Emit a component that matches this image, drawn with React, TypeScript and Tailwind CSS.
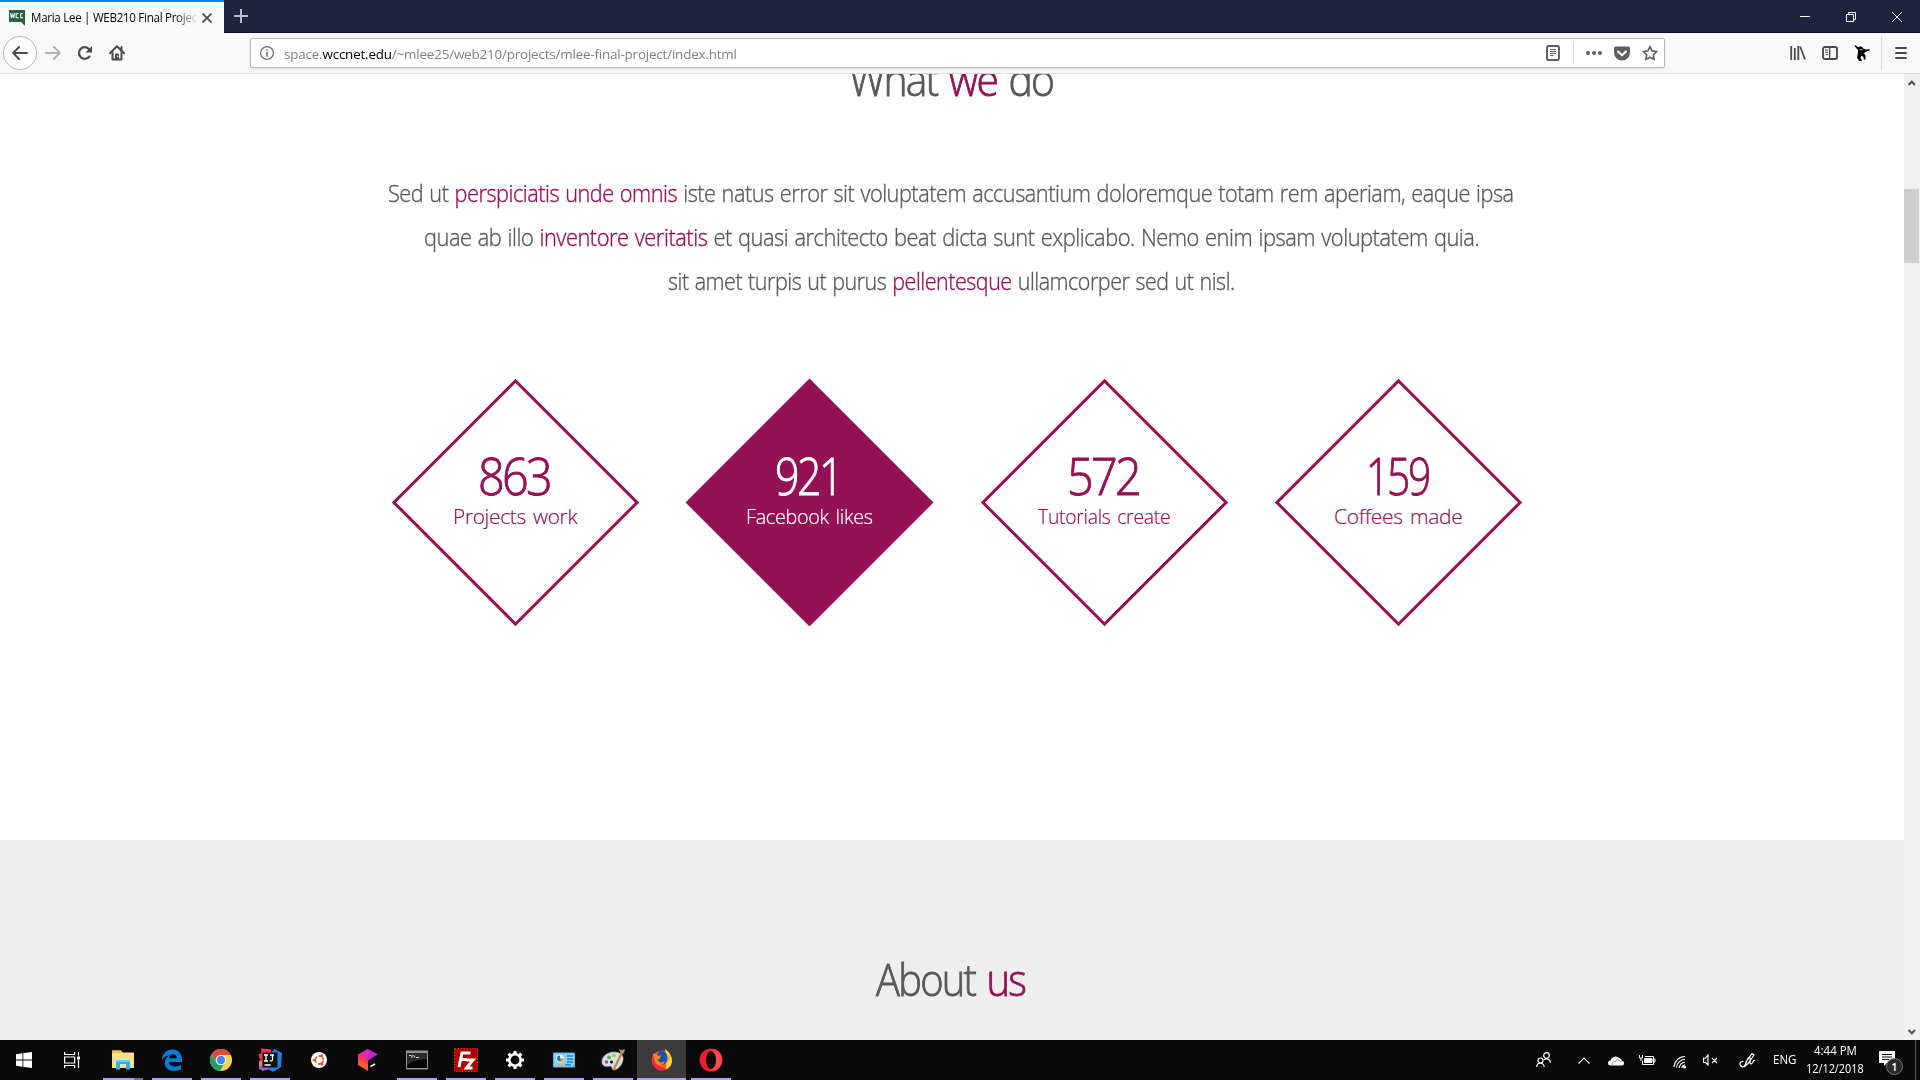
import { useLayoutEffect, useRef, useState, type ReactNode } from "react";

/** Single line of text condensed or stretched to a given width. */
function Fit({ w, className = "", children }: { w: number; className?: string; children: ReactNode }) {
  const ref = useRef<HTMLSpanElement>(null);
  const [scale, setScale] = useState(1);
  useLayoutEffect(() => {
    if (ref.current) setScale(w / ref.current.offsetWidth);
  }, [w]);
  return (
    <span className={`block shrink-0 ${className}`} style={{ width: w }}>
      <span ref={ref} className="inline-block origin-left whitespace-nowrap" style={{ transform: `scaleX(${scale})` }}>
        {children}
      </span>
    </span>
  );
}

const Hi = ({ children }: { children: ReactNode }) => <span className="text-[#951155]">{children}</span>;

function TabBar() {
  return (
    <div className="flex h-[33px] bg-[#202340]">
      <div className="flex h-[33px] w-[224px] items-center border-t-2 border-[#0a84ff] bg-[#f9f9f9] pl-[9px]">
        <svg width="16" height="16" viewBox="0 0 16 16" className="mt-px shrink-0">
          <path d="M0 0h16v16l-4-4H0z" fill="#27623f" />
          <path d="M1.500 3l.8 5 1.200-3.500L4.700 8l.8-5M9.500 3.500H7.200v4.200h2.300M14 3.500h-2.300v4.200H14" fill="none" stroke="#dfe9e3" strokeWidth="1.200" />
        </svg>
        <div className="ml-[6px] w-[167px] overflow-hidden text-[12px] leading-[20px] text-black [mask-image:linear-gradient(to_right,black_145px,transparent_167px)]">
          <Fit w={166} className="tracking-[-0.3px]">Maria Lee | WEB210 Final Projec</Fit>
        </div>
        <svg width="10" height="10" viewBox="0 0 10 10" className="ml-[4px]" stroke="#4a4a4f" strokeWidth="1.700">
          <path d="M.5.5l9 9M9.500.5l-9 9" />
        </svg>
      </div>
      <div className="flex flex-1 items-center border-b border-[#0f1126] pl-[10px]">
        <svg width="14" height="14" viewBox="0 0 14 14" stroke="#b9bac6" strokeWidth="2"><path d="M7 0v14M0 7h14" /></svg>
        <div className="flex-1" />
        <svg width="46" height="32" viewBox="0 0 46 32" stroke="#fff" fill="none"><path d="M18 16.500h10" /></svg>
        <svg width="46" height="32" viewBox="0 0 46 32" stroke="#fff" fill="none"><path d="M18.500 14.500h7v7h-7zM20.500 14.500v-2h7v7h-2" /></svg>
        <svg width="46" height="32" viewBox="0 0 46 32" stroke="#fff" fill="none"><path d="M18 12l10 10M28 12l-10 10" /></svg>
      </div>
    </div>
  );
}

function NavBar() {
  return (
    <div className="flex h-[41px] items-center border-b border-[#d9d9db] bg-[#f9f9f9]">
      <div className="ml-[3px] flex size-[34px] items-center justify-center rounded-full border border-[#b5b5b7] bg-white">
        <svg width="16" height="14" viewBox="0 0 16 14" fill="none" stroke="#4a4a4f" strokeWidth="2" strokeLinecap="round" strokeLinejoin="round"><path d="M15 7H1.500M7 1L1.200 7 7 13" /></svg>
      </div>
      <svg width="16" height="14" viewBox="0 0 16 14" className="ml-[8px]" fill="none" stroke="#b3b3b6" strokeWidth="2" strokeLinecap="round" strokeLinejoin="round"><path d="M1 7h13.500M9 1l5.800 6L9 13" /></svg>
      <svg width="16" height="16" viewBox="0 0 16 16" className="ml-[16px]"><path d="M12.400 11.500A5.800 5.800 0 1 1 12.200 4.200" fill="none" stroke="#4a4a4f" strokeWidth="2.200" strokeLinecap="round" /><path d="M15 1v6.500H8.500z" fill="#4a4a4f" /></svg>
      <svg width="16" height="16" viewBox="0 0 16 16" className="ml-[16px]"><path d="M1 8.200L8 1.300l7 6.900M12.500 2v3" fill="none" stroke="#4a4a4f" strokeWidth="2" strokeLinecap="round" strokeLinejoin="round" /><path d="M2.500 8v6.500a1 1 0 0 0 1 1h9a1 1 0 0 0 1-1V8L11.500 6v7.500h-7V6z" fill="#4a4a4f" /><path d="M6 14V9.500a1 1 0 0 1 1-1h2a1 1 0 0 1 1 1V14z" fill="#4a4a4f" /><circle cx="8.800" cy="11.300" r=".8" fill="#fff" /></svg>
      <div className="ml-[125px] flex h-[30px] w-[1415px] items-center rounded-[2px] border border-[#b8b8ba] bg-white shadow-sm">
        <svg width="14" height="14" viewBox="0 0 14 14" className="ml-[9px]"><circle cx="7" cy="7" r="6.400" fill="none" stroke="#6a6a6e" strokeWidth="1.200" /><path d="M6.200 6h1.600v4.700H6.200zM6.200 3.200h1.600v1.600H6.200z" fill="#6a6a6e" /></svg>
        <Fit w={453} className="mt-[2px] ml-[10px] text-[13.500px] leading-[24px] tracking-[-0.2px] text-[#808080]">space.<span className="text-black">wccnet.edu</span>/~mlee25/web210/projects/mlee-final-project/index.html</Fit>
        <div className="flex-1" />
        <svg width="14" height="16" viewBox="0 0 14 16"><rect x="1" y="1" width="12" height="14" rx="1.500" fill="none" stroke="#5f5f62" strokeWidth="1.900" /><path d="M4 4.500h6M4 6.500h6M4 8.500h6M4 10.500h3.500" stroke="#5f5f62" /></svg>
        <div className="ml-[13px] h-[22px] w-px bg-[#dcdcde]" />
        <svg width="16" height="4" viewBox="0 0 16 4" className="ml-[12px]" fill="#5f5f62"><circle cx="2" cy="2" r="2" /><circle cx="8" cy="2" r="2" /><circle cx="14" cy="2" r="2" /></svg>
        <svg width="16" height="15" viewBox="0 0 16 15" className="ml-[12px]"><path d="M1.500.5h13A1.500 1.500 0 0 1 16 2v4.500a8 8 0 0 1-16 0V2A1.500 1.500 0 0 1 1.500.5z" fill="#5f5f62" /><path d="M4 5.500l4 3.800 4-3.800" fill="none" stroke="#fff" strokeWidth="2" strokeLinecap="round" strokeLinejoin="round" /></svg>
        <svg width="16" height="16" viewBox="0 0 16 16" className="mr-[6px] ml-[12px]"><path d="M8 1.500l2 4.400 4.800.6-3.500 3.300.9 4.800L8 12.300l-4.200 2.300.9-4.800L1.200 6.500 6 5.900z" fill="none" stroke="#5f5f62" strokeWidth="1.700" strokeLinejoin="round" /></svg>
      </div>
      <svg width="16" height="14" viewBox="0 0 16 14" className="ml-[125px]" stroke="#4a4a4f" strokeWidth="1.800"><path d="M1.200 0v14M4.800 2v12M8.300 0v14M10.200.5L15 13.500" /></svg>
      <svg width="16" height="14" viewBox="0 0 16 14" className="ml-[16px]" fill="none" stroke="#4a4a4f"><rect x="1" y="1" width="14" height="12" rx="2" strokeWidth="1.900" /><path d="M7.700 1v12" strokeWidth="1.300" /><path d="M3 4h3M3 6.200h3M4 8.400h2" /></svg>
      <svg width="16" height="16" viewBox="0 0 16 16" className="ml-[16px]"><path d="M1 0l3.500 2.500C5 1 8.500 1 9 3.500l3.500 1L15.500 4v1.500L11 7 10 8.500l1.500 2V14L10 15l-.8-3.500L7.500 11 6.500 12.500 8 16H5l-2-3.500.8-3.500L4 5 .5 1z" fill="#000" /><path d="M5.500 4.700h3" stroke="#f9f9f9" strokeWidth=".8" /></svg>
      <div className="ml-[11px] h-[34px] w-px bg-[#dcdcde]" />
      <svg width="12" height="12" viewBox="0 0 12 12" className="ml-[13px]" stroke="#4a4a4f" strokeWidth="2" strokeLinecap="round"><path d="M1 1h10M1 6h10M1 11h10" /></svg>
    </div>
  );
}

const stats = [
  { n: "863", nw: 72, label: "Projects work", lw: 124 },
  { n: "921", nw: 66, label: "Facebook likes", lw: 127, filled: true },
  { n: "572", nw: 72, label: "Tutorials create", lw: 132 },
  { n: "159", nw: 63, label: "Coffees made", lw: 128 },
];

function Stat({ n, nw, label, lw, filled }: (typeof stats)[number]) {
  return (
    <div className={`relative flex h-[247px] w-[247px] flex-col items-center pt-[70px] ${filled ? "text-white" : "text-[#951155]"}`}>
      <div className={`absolute top-[36px] left-[36px] size-[175px] rotate-45 border-[3px] border-[#951155] ${filled ? "bg-[#951155]" : ""}`} />
      <Fit w={nw} className="relative mr-[3px] text-[52px] leading-[52px] tracking-[-3px] [-webkit-text-stroke:0.9px]">{n}</Fit>
      <Fit w={lw} className="relative mt-px mr-px text-[21px] leading-[28px] tracking-[-0.3px] [word-spacing:2px] [-webkit-text-stroke:0.2px]">{label}</Fit>
    </div>
  );
}

function Page() {
  return (
    <div className="flex h-[966px]">
      <div className="flex w-[1904px] flex-col overflow-hidden bg-white font-light text-[#58595b]">
        <section className="flex h-[766px] shrink-0 flex-col items-center">
          <Fit w={204} className="mt-[-25px] mr-[3px] text-[44px] leading-[60px] tracking-[-2px] [word-spacing:3px] [-webkit-text-stroke:0.8px]">What <Hi>we</Hi> do</Fit>
          <div className="mt-[62px] mr-[2px] flex flex-col items-center text-[24px] leading-[44px] tracking-[-0.500px] [word-spacing:1px] [-webkit-text-stroke:0.35px]">
            <Fit w={1126}>Sed ut <Hi>perspiciatis unde omnis</Hi> iste natus error sit voluptatem accusantium doloremque totam rem aperiam, eaque ipsa</Fit>
            <Fit w={1055}>quae ab illo <Hi>inventore veritatis</Hi> et quasi architecto beat dicta sunt explicabo. Nemo enim ipsam voluptatem quia.</Fit>
            <Fit w={567}>sit amet turpis ut purus <Hi>pellentesque</Hi> ullamcorper sed ut nisl.</Fit>
          </div>
          <div className="mt-[76px] ml-[10px] flex gap-[47.400px]">
            {stats.map((s) => <Stat key={s.n} {...s} />)}
          </div>
        </section>
        <section className="flex h-[200px] shrink-0 flex-col items-center bg-[#eeeeee] pt-[109px]">
          <Fit w={149} className="mr-[3px] text-[44px] leading-[60px] tracking-[-2px] [word-spacing:3px] [-webkit-text-stroke:0.8px]">About <Hi>us</Hi></Fit>
        </section>
      </div>
      <div className="flex w-4 flex-col items-start bg-[#f0f0f0]">
        <svg width="16" height="17" viewBox="0 0 16 17" fill="none" stroke="#505050" strokeWidth="2"><path d="M4.500 11l3.300-3.300L11 11" /></svg>
        <div className="mt-[98px] h-[74px] w-[15px] bg-[#cdcdcd]" />
        <div className="flex-1" />
        <svg width="16" height="17" viewBox="0 0 16 17" fill="none" stroke="#505050" strokeWidth="2"><path d="M4.500 7l3.300 3.300L11 7" /></svg>
      </div>
    </div>
  );
}

const Art = ({ children }: { children: ReactNode }) => <svg width="24" height="24" viewBox="0 0 24 24">{children}</svg>;

const apps: { id: string; open: boolean; active?: boolean; art: ReactNode }[] = [
  { id: "explorer", open: true, art: <Art><path d="M1 2.500h9l2 2h11V20H1z" fill="#ffe08a" /><path d="M1 2.500h9l1.500 2.500H1z" fill="#f3b928" /><path d="M3 3.500h5v1H3z" fill="#fff6" /><path d="M5 12h14v9.500h-4V16H9v5.500H5z" fill="#35b0ea" /><path d="M5 12h14v2H5z" fill="#72cdf4" /></Art> },
  { id: "edge", open: true, art: <Art><path d="M2 12.500C2 5.500 6.500 1.500 12.500 1.500c6.500 0 9.500 5 9.500 10v2.500H9c.3 3.500 3.500 4.500 6.300 4.500 2.300 0 4.300-.6 5.700-1.500v4.300c-2 1.200-4.500 1.700-7.200 1.700C8.500 23 4.800 19.500 4.800 15c0-3.500 2-6.300 5-7.700C6 7.500 3.500 9.500 2 12.500zM9.100 10.300h7.700c0-2-1-4.100-3.600-4.100-2.500 0-3.700 2-4.100 4.100z" fill="#0b7bdb" /></Art> },
  { id: "chrome", open: true, art: <Art><circle cx="12" cy="12" r="11" fill="#ffcf47" /><path d="M2.500 6.500A11 11 0 0 0 11 23l5-8.500L12 12 7 14z" fill="#1da261" /><path d="M2.500 6.500A11 11 0 0 1 21.700 7H12l-4.800 7z" fill="#dd4b3e" /><circle cx="12" cy="12" r="5.300" fill="#f4f4f4" /><circle cx="12" cy="12" r="4.200" fill="#4285f4" /></Art> },
  { id: "intellij", open: true, art: <Art><path d="M3 .5l10 1 2 10H2L.5 6.500 3.500 5z" fill="#fe315d" /><path d="M13 5l3-4 8 4-1 14-7 4.500-6-4z" fill="#1f7ee8" /><path d="M1 13l6-3 5 11-6 1-5-2z" fill="#e27a6b" /><path d="M2 18h7v3.500L5 23l-4-2z" fill="#9b5bd8" /><path d="M10 18h6l-1 6-5-3z" fill="#2f78e8" /><path d="M4.500 4.500h15v15h-15z" fill="#111" /><path d="M6 7h4M8 7v6M6 13h4M12 7h4M14.500 7v4.500c0 1.500-1.500 1.700-2.700 1.200M6.500 17h6" fill="none" stroke="#fff" strokeWidth="1.300" /></Art> },
  { id: "ubuntu", open: false, art: <Art><circle cx="12" cy="12" r="8" fill="#fff" /><circle cx="12.300" cy="12" r="4" fill="none" stroke="#e2541f" strokeWidth="1.500" strokeDasharray="6.900 1.500" strokeDashoffset="-.8" /><circle cx="6.900" cy="12" r="1.300" fill="#e2541f" /><circle cx="14.800" cy="7.500" r="1.300" fill="#e2541f" /><circle cx="14.800" cy="16.500" r="1.300" fill="#e2541f" /></Art> },
  { id: "toolbox", open: false, art: <Art><path d="M12 1l10 5.500L12 12.500 2 6.500z" fill="#c524cf" /><path d="M12 1L2 6.500V12l10-2z" fill="#e22fa0" /><path d="M2 6.500l10 6V23L2 17z" fill="#ff5a3c" /><path d="M2 6.500l10 6V16L2 11z" fill="#fa3358" /><path d="M22 6.500V17l-10 6V12.500z" fill="#120414" /><path d="M14.500 18.500l4.500-2.500" stroke="#fff" strokeWidth="1.500" /></Art> },
  { id: "terminal", open: true, art: <Art><path d="M1 2.500h22v19H1z" fill="#8d959a" /><path d="M2 5h20v15H2z" fill="#050505" /><path d="M2 5h20v6C14 11 8 13 2 17z" fill="#2b2d2f" /><path d="M4 7.500h2M7 7v3M8.500 7l1.500 2.500M11 9.500h3" stroke="#ddd" /></Art> },
  { id: "filezilla", open: true, art: <Art><path d="M.5.5h23v23H.5z" fill="#b50000" stroke="#e02a20" strokeDasharray="1.500 1.500" /><path d="M5 19L8 5h8.500M6.500 11.500h6.500M12.500 12h6.500l-6.500 8h6" fill="none" stroke="#fff" strokeWidth="3" /></Art> },
  { id: "settings", open: true, art: <Art><circle cx="12" cy="12" r="5.700" fill="none" stroke="#fff" strokeWidth="2.600" /><path d="M12 3v3M12 18v3M3 12h3M18 12h3M5.600 5.600l2.200 2.200M16.200 16.200l2.200 2.200M18.400 5.600l-2.200 2.200M7.800 16.200l-2.200 2.200" stroke="#fff" strokeWidth="3.200" /></Art> },
  { id: "panel", open: true, art: <Art><path d="M1.500 5h21v14h-21z" fill="#82d1f7" stroke="#4bb3e8" /><circle cx="8" cy="10.500" r="4" fill="#e9f7ff" /><path d="M8 10.500V7.500a3 3 0 1 0 3 3z" fill="#2379c4" /><path d="M8 10.500h4a4 4 0 0 1-2 3.400z" fill="#f5a838" /><path d="M15 8h6M15 11h6M15 14h6" stroke="#2d83c4" strokeWidth="1.300" /><path d="M4 16.800h8" stroke="#f5a838" strokeWidth="1.300" /><path d="M13 16.800h6" stroke="#2379c4" strokeWidth="1.300" /></Art> },
  { id: "paint", open: true, art: <Art><path d="M1 15C0 9 6 4 13 4c6 0 10 3 9 8-1 6-6 10-9 10-3 0-1-4-4-4-3 1-7 1-8-3z" fill="#cfe4f2" stroke="#88aac0" strokeWidth=".6" /><circle cx="13" cy="7.500" r="2" fill="#f4ba24" /><circle cx="8" cy="9.500" r="2" fill="#62b540" /><circle cx="5.500" cy="14" r="1.800" fill="#dd4537" /><circle cx="10.500" cy="14" r="1.500" fill="#111" /><path d="M20.500 5.500L12.500 22" stroke="#d68026" strokeWidth="2.200" /><path d="M19 4l-1-3 3 1 3-1-1 4-3 2z" fill="#b98c5f" /></Art> },
  { id: "firefox", open: true, active: true, art: <Art><circle cx="12" cy="12.500" r="10" fill="#ff6611" /><path d="M12 22.500A10 10 0 0 1 2 12.500L3 6l3-2 3 14 8 3z" fill="#f7254b" /><path d="M15 1c4 2.500 7 7 6.900 12a10 10 0 0 1-6 8.500L17 12z" fill="#ffdd35" /><path d="M8 4c3-2.500 7-1 8.500 2 2 4 1.500 8-1.500 10-4 2-8-1-8-5z" fill="#1d52b5" /><path d="M3 6c2-.5 4 0 5 2l3-.5-1 3-2 1c0 3 4 4 7 1.500-1 4-6 6-9.500 2z" fill="#ff8a16" /><path d="M17 5c2 4 1 8-2 11 4-1 5-5 5-8z" fill="#ffb52c" /></Art> },
  { id: "opera", open: true, art: <Art><ellipse cx="12" cy="12" rx="11.500" ry="11.500" fill="#ee1d2c" /><path d="M16 1.500a11.500 11.500 0 0 1 0 21c-2 .5-4 0-5-1 8-1 8-18 0-19 1-1 3-1.500 5-1z" fill="#ff4a50" /><ellipse cx="12" cy="12" rx="5" ry="9" fill="#0b0b0b" /></Art> },
];

function Taskbar() {
  return (
    <div className="flex h-10 items-center bg-[#0a0a0a] text-white">
      <div className="flex w-[48px] justify-center">
        <svg width="16" height="16" viewBox="0 0 16 16" fill="#fff"><path d="M0 2.200L6.500 1.300v6.300H0zM7.300 1.200L16 0v7.600H7.300zM0 8.400h6.500v6.300L0 13.800zM7.300 8.400H16V16l-8.700-1.200z" /></svg>
      </div>
      <div className="flex w-[50px] pl-4">
        <svg width="16" height="16" viewBox="0 0 16 16" fill="none" stroke="#fff" strokeWidth="1.200"><path d="M.6 0v2.500h10V0M.6 16v-2.500h10V16M.6 5h10v6H.6zM14.500 0v3.500M14.500 8v8" /><path d="M13 4.500h3v3h-3z" fill="#fff" stroke="none" /></svg>
      </div>
      {apps.map((a) => (
        <div key={a.id} className={`relative flex h-10 w-[49px] items-center justify-center ${a.active ? "bg-[#3b3b3b]" : ""}`}>
          {a.art}
          {a.open && <div className={`absolute bottom-0 h-[2px] bg-[#aaa5f2] ${a.active ? "inset-x-0" : "left-[5px] w-10"}`} />}
          {a.id === "explorer" && <div className="absolute bottom-0 left-[36px] h-[2px] w-[9px] bg-[#7773a8]" />}
        </div>
      ))}
      <div className="flex-1" />
      <svg width="16" height="16" viewBox="0 0 16 16" className="mr-px" fill="none" stroke="#fff" strokeWidth="1.200"><circle cx="10.500" cy="3.500" r="2.800" /><circle cx="4.500" cy="8.500" r="2.500" /><path d="M.7 15c0-5 7-5 7.500 0M8 7.800c3-2 6-.5 6.500 3" /></svg>
      <svg width="12" height="7" viewBox="0 0 12 7" className="ml-[25px]" fill="none" stroke="#fff" strokeWidth="1.200"><path d="M.5 6.500L6 1l5.500 5.500" /></svg>
      <svg width="17" height="11" viewBox="0 0 17 11" className="ml-[18px]" fill="#fff"><path d="M2.500 10.500a2.500 2.500 0 0 1 0-5A5 5 0 0 1 11 3a4 4 0 0 1 3 3 2.300 2.300 0 0 1 .5 4.500z" /><path d="M4.500 10.500C3 8 6 6 7.500 6.500 9 4 12 4.500 12.500 7" fill="none" stroke="#555" strokeWidth=".7" /></svg>
      <svg width="17" height="12" viewBox="0 0 17 12" className="ml-[14px]" fill="none" stroke="#fff"><path d="M3.500 6.500v4h11v-8H6M14.500 5H16v3h-1.500M.5 1v3h3V1M2 4v3" /><path d="M5.500 4.500h7.500v4H5.500z" fill="#fff" /></svg>
      <svg width="14" height="14" viewBox="0 0 14 14" className="mt-[4px] ml-[17px]" fill="none" stroke="#fff" strokeWidth="1.100"><path d="M1 12A11 11 0 0 1 12 1.500M3.500 12.700A9 9 0 0 1 12 4.300M6.200 13A6.500 6.500 0 0 1 12 7.200M8.800 13A4 4 0 0 1 12 9.800" /><circle cx="11.500" cy="12" r="1" fill="#fff" /></svg>
      <svg width="15" height="12" viewBox="0 0 15 12" className="ml-[16px]" fill="none" stroke="#fff" strokeWidth="1.100"><path d="M.6 4v4.500h2L5 11V1L2.600 4zM9 4l5 5M14 4L9 9" /></svg>
      <svg width="17" height="17" viewBox="0 0 17 17" className="ml-[21px]" fill="none" stroke="#fff" strokeWidth="1.200"><path d="M6 14l1-4 6-8.500 2 1.500-6 8.500zM4.500 9.500C1 9 0 12 2 14c2 2 4 0 5-3 1-4 3-7 4-5s-1 6 1 6 1.500-4 4-3.500" /></svg>
      <Fit w={23} className="ml-[17px] text-[12px] leading-[16px]">ENG</Fit>
      <div className="ml-[10px] flex w-[58px] flex-col items-center text-[12px] leading-[18px]">
        <Fit w={43}>4:44 PM</Fit>
        <Fit w={58}>12/12/2018</Fit>
      </div>
      <div className="relative ml-[15px] h-[18px] w-4">
        <svg width="16" height="16" viewBox="0 0 16 16"><path d="M0 0h16v12H8l-3 3v-3H0z" fill="#fff" /><path d="M3 3.500h10M3 6h10M3 8.500h7" stroke="#111" strokeWidth="1.200" /></svg>
        <span className="absolute top-[7px] left-[7px] flex size-[17px] items-center justify-center rounded-full border border-[#777] bg-[#2a2a2a] text-[11px] leading-none font-semibold">1</span>
      </div>
      <div className="ml-[20px] h-10 w-px bg-[#5a5a5a]" />
      <div className="w-1" />
    </div>
  );
}

export default function App() {
  return (
    <div className="h-[1080px] w-[1920px] overflow-hidden bg-white font-['Open_Sans',sans-serif]">
      <TabBar />
      <NavBar />
      <Page />
      <Taskbar />
    </div>
  );
}
